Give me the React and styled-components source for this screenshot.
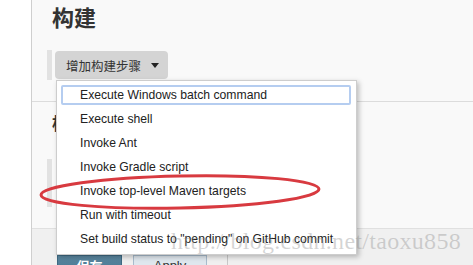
import React from 'react'
import styled, { createGlobalStyle } from 'styled-components'

const GlobalStyle = createGlobalStyle`
    html, body {
        margin: 0;
        padding: 0;
        background: #fff;
        overflow: hidden;
    }
    body {
        font-family: 'Liberation Sans', Arial, 'Noto Sans CJK SC', sans-serif;
        color: #333;
    }
`

const buildSteps = [
    'Execute Windows batch command',
    'Execute shell',
    'Invoke Ant',
    'Invoke Gradle script',
    'Invoke top-level Maven targets',
    'Run with timeout',
    'Set build status to "pending" on GitHub commit',
]

const Caret = () => (
    <svg width="8" height="5" viewBox="0 0 8 5">
        <path d="M0 0 L8 0 L4 5 Z" fill="#222" />
    </svg>
)

const App = () => {
    const [active] = React.useState(0)

    return (
        <Page>
            <GlobalStyle />
            <Sidebar />
            <Main>
                <Section>
                    <Heading>构建</Heading>
                    <StepBar>
                        <AddButton>
                            增加构建步骤
                            <Caret />
                        </AddButton>
                    </StepBar>
                </Section>
                <Section $grow>
                    <Heading $small>构建后操作</Heading>
                    <StepBar $tall />
                </Section>
                <BottomBar>
                    <SaveButton>保存</SaveButton>
                    <ApplyButton>Apply</ApplyButton>
                    <Divider />
                </BottomBar>
            </Main>

            <Menu>
                {buildSteps.map((step, i) => (
                    <MenuItem key={step} $active={i === active}>
                        {step}
                    </MenuItem>
                ))}
            </Menu>

            <Marker width="292" height="48" viewBox="0 0 292 48">
                <ellipse
                    cx="143"
                    cy="23"
                    rx="139"
                    ry="16"
                    fill="none"
                    stroke="#d83a40"
                    strokeWidth="3"
                    transform="rotate(-1.2 143 23)"
                />
            </Marker>

            <Watermark>http://blog.csdn.net/taoxu858</Watermark>
        </Page>
    )
}

export default App

const Page = styled.div`
    position: relative;
    display: flex;
    width: 473px;
    height: 265px;
    overflow: hidden;
`

const Sidebar = styled.div`
    width: 31px;
    flex-shrink: 0;
    background: #fff;
    border-right: 1px solid #cfcfcf;
`

const Main = styled.div`
    flex: 1;
    display: flex;
    flex-direction: column;
    background: #f9f9f9;
`

const Section = styled.div`
    padding: 2px 0 21px 20px;
    border-bottom: ${props => (props.$grow ? 'none' : '1px solid #dcdcdc')};
    flex: ${props => (props.$grow ? 1 : 'none')};
`

const Heading = styled.h2`
    margin: ${props => (props.$small ? '8px 0 0' : '0')};
    font-family: 'Noto Sans CJK SC', 'Liberation Sans', sans-serif;
    font-size: ${props => (props.$small ? '17px' : '22px')};
    line-height: ${props => (props.$small ? '22px' : '28px')};
    font-weight: bold;
    color: #333;
`

const StepBar = styled.div`
    display: flex;
    align-items: center;
    margin: ${props => (props.$tall ? '25px 0 0 -5px' : '20px 0 0 -5px')};
    height: ${props => (props.$tall ? '48px' : '30px')};
    border-left: 5px solid #e2e2e2;
`

const AddButton = styled.button`
    display: flex;
    align-items: center;
    gap: 10px;
    height: 28px;
    margin-left: 3px;
    padding: 0 9px 0 11px;
    border: none;
    border-radius: 4px;
    background: #d4d4d4;
    color: #333;
    font-family: 'Noto Sans CJK SC', 'Liberation Sans', sans-serif;
    font-size: 12.5px;
`

const BottomBar = styled.div`
    display: flex;
    align-items: flex-start;
    gap: 11px;
    height: 40px;
    padding: 26px 0 0 25px;
    box-sizing: border-box;
    background: #f0f0f0;
    border-top: 1px solid #e0e0e0;
`

const SaveButton = styled.button`
    width: 65px;
    height: 26px;
    padding: 0 0 6px;
    border: 1px solid #3f6a83;
    background: linear-gradient(#5b87a0, #40708b);
    color: #fff;
    font-family: 'Noto Sans CJK SC', 'Liberation Sans', sans-serif;
    font-size: 13px;
    font-weight: bold;
`

const ApplyButton = styled.button`
    width: 74px;
    height: 26px;
    padding: 0 0 6px;
    border: 1px solid #a9bccd;
    background: #dfe7ee;
    color: #333;
    font-family: 'Liberation Sans', Arial, sans-serif;
    font-size: 13px;
`

const Divider = styled.div`
    width: 1px;
    height: 12px;
    margin-left: 9px;
    background: #c8c8c8;
`

const Menu = styled.ul`
    position: absolute;
    left: 56px;
    top: 80px;
    width: 301px;
    margin: 0;
    padding: 2px 5px 3px 4px;
    box-sizing: border-box;
    list-style: none;
    background: #fff;
    border: 1px solid #cdcdcd;
    box-shadow: 2px 2px 5px rgba(0, 0, 0, 0.25);
`

const MenuItem = styled.li`
    display: flex;
    align-items: center;
    height: 24px;
    padding-left: 17px;
    box-sizing: border-box;
    font-size: 12.2px;
    color: #222;
    white-space: nowrap;
    border: 2px solid ${props => (props.$active ? '#b5cdf0' : 'transparent')};
    border-radius: 2px;
    ${props => props.$active && 'height: 20px; margin: 2px 0;'}
`

const Marker = styled.svg`
    position: absolute;
    left: 37px;
    top: 169px;
    pointer-events: none;
`

const Watermark = styled.div`
    position: absolute;
    left: 171px;
    top: 228px;
    font-family: 'Liberation Serif', 'Times New Roman', serif;
    font-size: 24px;
    color: rgba(130, 130, 130, 0.34);
    letter-spacing: 0.3px;
    pointer-events: none;
    white-space: nowrap;
`
